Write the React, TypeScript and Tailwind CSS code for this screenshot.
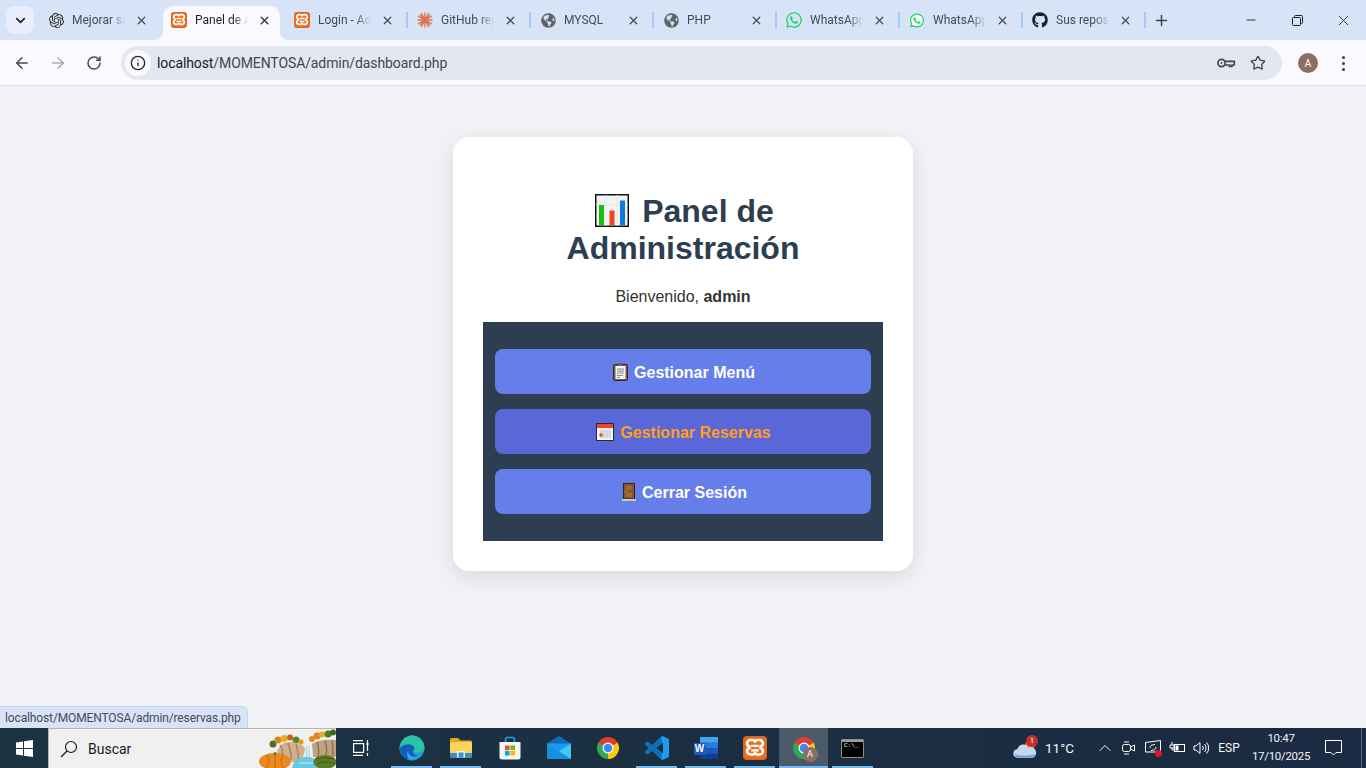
import React from "react";
import { ArrowLeft, ArrowRight, RotateCw, Info, Star, X, Plus, ChevronDown, ChevronUp, Minus } from "lucide-react";
import { FaGithub, FaGlobeAmericas, FaWhatsapp } from "react-icons/fa";
import { IoLogoWhatsapp } from "react-icons/io5";
import { SiOpenai } from "react-icons/si";

const Xampp = ({ size = 16 }: { size?: number }) => (
  <svg width={size} height={size} viewBox="0 0 16 16">
    <rect x="0.500" y="0.500" width="15" height="15" rx="2" fill="#ee6f22" stroke="#d9651e" />
    <path d="M5 2.700h1.500c.8 0 1 .6 1.500 1 .5-.4.7-1 1.500-1H11a2.300 2.300 0 0 1 2.300 2.300c0 1-.8 1.700-1.600 2 .1.400.1.600 0 1 .8.300 1.600 1 1.600 2a2.300 2.300 0 0 1-2.300 2.300H9.500c-.8 0-1-.6-1.500-1-.5.400-.7 1-1.500 1H5a2.300 2.300 0 0 1-2.300-2.300c0-1 .8-1.700 1.600-2-.1-.4-.1-.6 0-1C3.500 6.700 2.700 6 2.700 5A2.300 2.300 0 0 1 5 2.700z" fill="none" stroke="#fff" strokeWidth="1.700" />
    <path d="M5.500 6.500h5M5.500 9.500h5" stroke="#fff" strokeWidth="1.500" />
  </svg>
);

const Spark = () => (
  <svg width="16" height="16" viewBox="0 0 16 16" stroke="#d97757" strokeWidth="1.400" strokeLinecap="round">
    <path d="M8 1v14M1 8h14M3 3l10 10M13 3L3 13M4.500 1.500l7 13M11.500 1.500l-7 13M1.500 4.500l13 7M14.500 4.500l-13 7" />
  </svg>
);

const WhatsFilled = () => (
  <span className="relative flex h-4 w-4 items-center justify-center">
    <span className="absolute inset-[2px] rounded-full bg-white" />
    <IoLogoWhatsapp className="relative text-[#25d366]" size={17} />
  </span>
);

type TabData = { title: string; icon: React.ReactNode; active?: boolean; sep?: boolean };

const tabs: TabData[] = [
  { title: "Mejorar su", icon: <SiOpenai size={15} className="text-[#2b2b2b]" /> },
  { title: "Panel de Administración", icon: <Xampp />, active: true },
  { title: "Login - Administración", icon: <Xampp />, sep: true },
  { title: "GitHub repos", icon: <Spark />, sep: true },
  { title: "MYSQL", icon: <FaGlobeAmericas size={15} className="text-[#5f6368]" />, sep: true },
  { title: "PHP", icon: <FaGlobeAmericas size={15} className="text-[#5f6368]" />, sep: true },
  { title: "WhatsApp Web", icon: <FaWhatsapp size={18} className="text-[#25d366]" />, sep: true },
  { title: "WhatsApp Web", icon: <WhatsFilled />, sep: true },
  { title: "Sus repositorios", icon: <FaGithub size={16} className="text-[#1b1f24]" />, sep: true },
];

const Tab = ({ t }: { t: TabData }) => (
  <div className="relative flex h-[34px] w-[123px] shrink-0 items-center pb-[6px]">
    {t.active && (
      <>
        <div className="absolute inset-y-0 left-0 w-[117px] rounded-t-[10px] bg-[#f9f9ff]" />
        <svg className="absolute bottom-0 -left-2 h-2 w-2" viewBox="0 0 8 8"><path d="M8 0v8H0a8 8 0 0 0 8-8z" fill="#f9f9ff" /></svg>
        <svg className="absolute bottom-0 left-[117px] h-2 w-2" viewBox="0 0 8 8"><path d="M0 0v8h8a8 8 0 0 1-8-8z" fill="#f9f9ff" /></svg>
      </>
    )}
    <div className="relative ml-2 flex h-4 w-4 shrink-0 items-center justify-center">{t.icon}</div>
    <div className={`relative ml-2 w-[53px] overflow-hidden whitespace-nowrap text-[12px] leading-4 [mask-image:linear-gradient(to_right,black_72%,transparent)] ${t.active ? "text-[#1f2329]" : "text-[#454b55]"}`}>
      {t.title}
    </div>
    <X size={13} strokeWidth={2.400} className={`relative ml-[10px] shrink-0 ${t.active ? "text-[#2a2e35]" : "text-[#474c55]"}`} />
    {t.sep && <div className="absolute left-[120px] top-[6px] h-4 w-[2px] bg-[#a8c7fa]" />}
  </div>
);

const KeyIcon = () => (
  <svg width="20" height="20" viewBox="0 0 20 20" fill="none" stroke="#43474e" strokeWidth="1.700">
    <circle cx="5.500" cy="10" r="3.600" />
    <circle cx="5.500" cy="10" r="1" fill="#43474e" stroke="none" />
    <path d="M9 8.300h9.300v3.700h-2.300v1.400h-2.500V12H9" />
  </svg>
);

const TabStrip = () => (
  <div className="flex h-10 shrink-0 items-end bg-[#d7e3f7]">
    <div className="mb-[6px] ml-[6px] mr-[6px] flex h-7 w-7 shrink-0 items-center justify-center self-end rounded-lg bg-[#e8eefb]">
      <ChevronDown size={15} strokeWidth={3} className="text-[#25282d]" />
    </div>
    <div className="flex items-end">
      {tabs.map((t, i) => <Tab key={i} t={t} />)}
    </div>
    <div className="mb-[10px] ml-[4px] flex h-[20px] w-5 items-center justify-center self-end">
      <Plus size={17} strokeWidth={2.200} className="text-[#3e434b]" />
    </div>
    <div className="ml-auto flex h-10 items-center self-start text-[#1c1e22]">
      <div className="flex w-[46px] justify-center"><Minus size={14} strokeWidth={1.500} /></div>
      <div className="flex w-[46px] justify-center">
        <svg width="11" height="11" viewBox="0 0 11 11" fill="none" stroke="currentColor"><rect x="0.500" y="2.500" width="8" height="8" rx="1" /><path d="M2.500 2.500V1.500a1 1 0 0 1 1-1h6a1 1 0 0 1 1 1v6a1 1 0 0 1-1 1h-1" /></svg>
      </div>
      <div className="flex w-[46px] justify-center"><X size={17} strokeWidth={1.200} /></div>
    </div>
  </div>
);

const Toolbar = () => (
  <div className="flex h-[46px] shrink-0 items-center border-b border-[#dfe1e8] bg-[#f9f9ff] pt-px">
    <div className="flex w-[121px] shrink-0 items-center pl-[13px] text-[#454a52]">
      <ArrowLeft size={18} strokeWidth={2} />
      <ArrowRight size={18} strokeWidth={2} className="ml-[18px] text-[#a9adb4]" />
      <RotateCw size={16} strokeWidth={2.200} className="ml-[19px]" />
    </div>
    <div className="flex h-[34px] w-[1161px] shrink-0 items-center rounded-full bg-[#e4e7f2] pl-1 pr-[16px]">
      <div className="flex h-[26px] w-[26px] items-center justify-center rounded-full bg-[#f9f9ff]">
        <Info size={16} strokeWidth={2} className="text-[#26282c]" />
      </div>
      <div className="ml-[6px] whitespace-nowrap text-[14px] leading-5 tracking-[-0.1px] text-[#3f4650]">
        <span className="text-[#15181d]">localhost</span>/MOMENTOSA/admin/dashboard.php
      </div>
      <div className="ml-auto flex items-center gap-[14px]">
        <KeyIcon />
        <Star size={16} strokeWidth={2} className="text-[#43474e]" />
      </div>
    </div>
    <div className="ml-4 flex h-5 w-5 items-center justify-center rounded-full bg-[#8d6e63] text-[10px] text-white">A</div>
    <div className="ml-[24px] flex flex-col gap-[3px]">
      <span className="h-[3px] w-[3px] rounded-full bg-[#3c4048]" />
      <span className="h-[3px] w-[3px] rounded-full bg-[#3c4048]" />
      <span className="h-[3px] w-[3px] rounded-full bg-[#3c4048]" />
    </div>
  </div>
);

const ChartEmoji = () => (
  <svg width="34" height="33" viewBox="0 0 34 33" className="ml-[3px] mr-[4px] inline-block align-[-5px]">
    <rect x="0.750" y="0.750" width="32.500" height="31.500" fill="#f4f4f4" stroke="#111" strokeWidth="1.500" />
    <path d="M1 11h32M1 22h32M11 1v31M22 1v31" stroke="#e6e6e6" />
    <rect x="4" y="11" width="5" height="20" fill="#16c10d" />
    <rect x="14.500" y="16.500" width="5" height="14.500" fill="#f0421c" />
    <rect x="25" y="6.500" width="5" height="24.500" fill="#1178e0" />
  </svg>
);

const ClipEmoji = () => (
  <svg width="15" height="18" viewBox="0 0 15 18">
    <rect x="0.500" y="1.500" width="14" height="16" rx="1" fill="#7a5a36" stroke="#2a2a2a" />
    <rect x="2.500" y="3" width="10" height="13" fill="#f3f3f3" />
    <path d="M4 6h7M4 8h7M4 10h7M4 12.500h6M4 14.500h3" stroke="#8a8a8a" />
    <rect x="5" y="0" width="5" height="3" fill="#5c6168" />
  </svg>
);

const CalEmoji = () => (
  <svg width="18" height="18" viewBox="0 0 18 18">
    <rect x="0.500" y="0.500" width="17" height="17" fill="#f4f4f4" stroke="#252a3a" />
    <rect x="1" y="1" width="16" height="4" fill="#f2452d" />
    <path d="M4 8h11M4 10h11M4 12h11M4 14h11M5 7v8M8 7v8M11 7v8M14 7v8" stroke="#b8b8b8" strokeWidth="0.600" />
    <rect x="3.500" y="10.500" width="3" height="3" fill="#e6404a" />
  </svg>
);

const DoorEmoji = () => (
  <svg width="14" height="18" viewBox="0 0 14 18">
    <rect x="1.500" y="0.500" width="11" height="15.500" fill="#8a5a2e" stroke="#2d2722" />
    <rect x="3.500" y="2.500" width="7" height="5" fill="#a16a38" stroke="#6c4522" strokeWidth="0.500" />
    <rect x="3.500" y="9" width="7" height="5.500" fill="#a16a38" stroke="#6c4522" strokeWidth="0.500" />
    <circle cx="4" cy="8.500" r="0.700" fill="#e3b23c" />
    <rect x="0" y="16" width="14" height="2" fill="#c9c9c9" />
  </svg>
);

const Btn = ({ icon, label, hover }: { icon: React.ReactNode; label: string; hover?: boolean }) => (
  <div className={`flex h-[45px] items-center justify-center whitespace-nowrap rounded-lg text-[16px] font-bold ${hover ? "bg-[#5a67d8] text-[#ff9f1c]" : "bg-[#667eea] text-white"}`}>
    <span className={`flex w-[19px] justify-center ${hover ? "mr-[6px]" : "mr-[4px]"}`}>{icon}</span>
    <span className="pt-[3px] leading-5">{label}</span>
  </div>
);

const Card = () => (
  <div className="flex h-[434px] w-[460px] flex-col rounded-2xl bg-white p-[30px] text-center shadow-[0_6px_20px_rgba(0,0,0,0.1)]">
    <h1 className="mx-auto mt-[26px] w-[300px] text-[32px] font-bold leading-[37px] text-[#2c3e50]">
      <ChartEmoji /> Panel de Administración
    </h1>
    <p className="mt-[21px] text-[16px] leading-[18px] text-[#333333]">Bienvenido, <strong>admin</strong></p>
    <div className="mt-[16px] flex flex-col gap-[15px] bg-[#2c3e50] px-3 py-[27px]">
      <Btn icon={<ClipEmoji />} label="Gestionar Menú" />
      <Btn icon={<CalEmoji />} label="Gestionar Reservas" hover />
      <Btn icon={<DoorEmoji />} label="Cerrar Sesión" />
    </div>
  </div>
);

const WinLogo = () => (
  <svg width="17" height="17" viewBox="0 0 17 17" fill="#fff">
    <path d="M0 2.400 7 1.400V8H0zM8 1.300 17 0v8H8zM0 9h7v6.600L0 14.600zM8 9h9v8l-9-1.300z" />
  </svg>
);

const Autumn = () => (
  <svg width="77" height="39" viewBox="0 0 77 39" className="absolute bottom-0 right-0">
    <g>
      <circle cx="14" cy="15" r="3.500" fill="#4c6f22" /><circle cx="19" cy="11" r="3.500" fill="#d8871c" /><circle cx="25" cy="9.500" r="3.500" fill="#e3b022" />
      <circle cx="31" cy="8.500" r="3" fill="#c95f1b" /><circle cx="37" cy="11" r="3.500" fill="#5f8226" /><circle cx="42" cy="13" r="2.500" fill="#e09a1e" />
      <circle cx="53" cy="10" r="3" fill="#e08a1e" /><circle cx="58" cy="7" r="3.500" fill="#ee7e1a" /><circle cx="63" cy="5.500" r="3" fill="#e3b022" />
      <circle cx="69" cy="5" r="3.500" fill="#55771f" /><circle cx="74" cy="3.500" r="3" fill="#3f6420" />
    </g>
    <path d="M17 30C17 20 22 13 30 13 38 13 44 15 46 20L45 33H20z" fill="#d3b08c" />
    <path d="M21 16 C24 20 24 26 22 31M29 14C30 19 33 24 32 31M37 15C38 21 40 25 39 31" stroke="#a48467" strokeWidth="1.500" fill="none" />
    <path d="M53 15C58 11 68 10 77 11V28H54z" fill="#bfa284" />
    <path d="M58 13C60 18 60 23 59 28M66 12C68 17 68 22 67 28M73 12C74 17 74 22 74 27" stroke="#8f7358" strokeWidth="1.500" fill="none" />
    <path d="M46 16 C47 21 44 26 43 31H55C54 26 52 21 51 16z" fill="#dff1f5" />
    <path d="M47.500 17v13M50 17v13" stroke="#a5d8e6" />
    <path d="M33 39C34 32 39 28 48 28 56 28 61 33 62 39z" fill="#6cc7e0" />
    <path d="M40 34h14" stroke="#a7e2ef" strokeWidth="1.500" />
    <ellipse cx="16" cy="32.500" rx="16" ry="8.500" fill="#ea8a1e" />
    <path d="M7 26Q13 32 7 39M16 24v15M25 26Q19 32 25 39" stroke="#bb621a" fill="none" />
    <circle cx="16" cy="24.500" r="1.500" fill="#5f7a26" />
    <ellipse cx="66" cy="33" rx="11.500" ry="7" fill="#5d7a26" />
    <path d="M57 30Q66 27 75 30M58 35Q66 31 76 35" stroke="#3f5a18" fill="none" />
  </svg>
);

const Edge = () => (
  <svg width="26" height="26" viewBox="0 0 26 26">
    <defs>
      <linearGradient id="ea" x1="0" y1="0" x2="1" y2="1"><stop offset="0" stopColor="#36c9a0" /><stop offset="1" stopColor="#1a8fe0" /></linearGradient>
    </defs>
    <circle cx="13" cy="13" r="12.500" fill="url(#ea)" />
    <path d="M1 13C2 5 8 1 13 .5 20 .5 25.500 6 25.500 13c0 3-3 4.500-6.500 4.500-3 0-4.500-1-5-1.500 2-1 2-4-1-5.500C9 9 3 9.500 1 13z" fill="#2bc3a6" />
    <path d="M1 13c3-4 9-4.500 12-3 3 1.500 3 4.500 1 5.500-1 2 1 4 4 5 -2 2.500-5 4-8 4C5 24.500.5 19 1 13z" fill="#0f5fc0" />
    <path d="M9 15.500c0 4 4 8 9 5.500 -2.500 3-5.500 4-8 3.500C8 22 7.500 18 9 15.500z" fill="#35a5ee" />
  </svg>
);

const Explorer = () => (
  <svg width="24" height="22" viewBox="0 0 24 22">
    <path d="M1 2.500A1.500 1.500 0 0 1 2.500 1H9l2.500 2.500h10A1.500 1.500 0 0 1 23 5v3H1z" fill="#e7a81f" />
    <rect x="1" y="5" width="22" height="15.500" rx="1.500" fill="#fbd55b" />
    <rect x="1" y="16" width="22" height="4.500" fill="#2f8fd8" />
    <rect x="8" y="14" width="8" height="6.500" fill="#f7f2d8" />
    <rect x="9.500" y="15.500" width="5" height="5" fill="#2f8fd8" />
  </svg>
);

const Store = () => (
  <svg width="24" height="24" viewBox="0 0 24 24">
    <path d="M7.500 7V3.500A2 2 0 0 1 9.500 1.500h5a2 2 0 0 1 2 2V7" fill="none" stroke="#1c9ee6" strokeWidth="1.700" />
    <path d="M1.500 6h21v15a2.500 2.500 0 0 1-2.500 2.500H4A2.500 2.500 0 0 1 1.500 21z" fill="#f5f5f5" />
    <rect x="7" y="9.500" width="4.600" height="4.600" fill="#f25022" />
    <rect x="12.400" y="9.500" width="4.600" height="4.600" fill="#7fba00" />
    <rect x="7" y="14.900" width="4.600" height="4.600" fill="#00a4ef" />
    <rect x="12.400" y="14.900" width="4.600" height="4.600" fill="#ffb900" />
  </svg>
);

const Mail = () => (
  <svg width="24" height="24" viewBox="0 0 24 24">
    <path d="M0 7.500 12 0l12 7.500V12H0z" fill="#0f6cbd" />
    <rect x="0" y="7.500" width="24" height="15.500" rx="0.500" fill="#1f97e8" />
    <path d="M0 7.500 12 15l12-7.500V23H10z" fill="#3ccbf4" />
    <path d="M0 7.500V23h24L0 7.500z" fill="#1490df" />
  </svg>
);

const Chrome = ({ size = 24 }: { size?: number }) => (
  <svg width={size} height={size} viewBox="0 0 24 24">
    <path d="M12 12 21.530 6.500A11 11 0 0 0 2.470 6.500L2.470 17.500z" fill="#e33b2e" />
    <path d="M12 12 2.470 6.500A11 11 0 0 0 14 22.800z" fill="#2da94f" />
    <path d="M12 12 21.530 6.500A11 11 0 0 1 12 23z" fill="#fdc60f" />
    <path d="M12 12 21.530 6.500H12z" fill="#e33b2e" />
    <circle cx="12" cy="12" r="5.500" fill="#fff" />
    <circle cx="12" cy="12" r="4.300" fill="#4285f4" />
  </svg>
);

const VSCode = () => (
  <svg width="24" height="24" viewBox="0 0 24 24">
    <defs><clipPath id="vl"><rect x="0" y="0" width="16.800" height="24" /></clipPath></defs>
    <path d="M23.150 2.587L18.210.21a1.494 1.494 0 0 0-1.705.29l-9.460 8.630-4.120-3.128a.999.999 0 0 0-1.276.057L.327 7.261A1 1 0 0 0 .326 8.740L3.899 12 .326 15.260a1 1 0 0 0 .001 1.479L1.650 17.940a.999.999 0 0 0 1.276.057l4.120-3.128 9.460 8.630a1.492 1.492 0 0 0 1.704.290l4.942-2.377A1.500 1.500 0 0 0 24 20.060V3.939a1.500 1.500 0 0 0-.85-1.352zm-5.146 14.861L10.826 12l7.178-5.448v10.896z" fill="#1f9cf0" />
    <path clipPath="url(#vl)" d="M23.150 2.587L18.210.21a1.494 1.494 0 0 0-1.705.29l-9.460 8.630-4.120-3.128a.999.999 0 0 0-1.276.057L.327 7.261A1 1 0 0 0 .326 8.740L3.899 12 .326 15.260a1 1 0 0 0 .001 1.479L1.650 17.940a.999.999 0 0 0 1.276.057l4.120-3.128 9.460 8.630a1.492 1.492 0 0 0 1.704.290l4.942-2.377A1.500 1.500 0 0 0 24 20.060V3.939a1.500 1.500 0 0 0-.85-1.352zm-5.146 14.861L10.826 12l7.178-5.448v10.896z" fill="#0b6fb8" />
  </svg>
);

const Word = () => (
  <span className="relative block h-[22px] w-6">
    <svg width="24" height="22" viewBox="0 0 24 22" className="absolute inset-0">
      <rect x="6" y="0" width="18" height="22" rx="1.500" fill="#2b7cd3" />
      <rect x="6" y="0" width="18" height="5.500" fill="#41a5ee" />
      <rect x="6" y="5.500" width="18" height="5.500" fill="#2b7cd3" />
      <rect x="6" y="11" width="18" height="5.500" fill="#185abd" />
      <rect x="6" y="16.500" width="18" height="5.500" fill="#103f91" />
      <rect x="0" y="6" width="12" height="12" rx="1" fill="#185abd" />
    </svg>
    <span className="absolute left-0 top-[6px] w-3 text-center font-['Liberation_Sans',sans-serif] text-[10px] font-bold leading-3 text-white">W</span>
  </span>
);

const Term = () => (
  <span className="flex h-[19px] w-[23px] flex-col rounded-[1px] border border-[#8a8f94] bg-black">
    <span className="h-[2px] w-full bg-[#9aa0a6]" />
    <span className="pl-[2px] font-['Liberation_Mono',monospace] text-[6px] leading-[7px] text-white">C:\_</span>
  </span>
);

const TaskCell = ({ children, on, active }: { children: React.ReactNode; on?: boolean; active?: boolean }) => (
  <div className={`relative flex h-10 w-[49px] shrink-0 items-center justify-center ${active ? "bg-[#4a5a68]" : ""}`}>
    {children}
    {on && <div className={`absolute bottom-0 h-[2px] bg-[#76b9ed] ${active ? "inset-x-0" : "inset-x-1"}`} />}
  </div>
);

const TrayCell = ({ w, children }: { w: string; children: React.ReactNode }) => (
  <div className={`flex h-10 shrink-0 items-center justify-center ${w}`}>{children}</div>
);

const Taskbar = () => (
  <div className="flex h-10 shrink-0 items-center bg-gradient-to-r from-[#1c3441] to-[#1a2a42] text-white">
    <div className="flex h-10 w-12 shrink-0 items-center justify-center"><WinLogo /></div>
    <div className="relative flex h-10 w-[288px] shrink-0 items-center border-t border-l border-[#b5b5b5] bg-[#f0f0f0] pl-[11px] text-[#1a1a1a]">
      <svg width="18" height="18" viewBox="0 0 18 18" fill="none" stroke="#1a1a1a" strokeWidth="1.200">
        <circle cx="11" cy="7" r="5.500" /><path d="M7 11 1 17" />
      </svg>
      <span className="ml-[10px] text-[14px] leading-5">Buscar</span>
      <Autumn />
    </div>
    <TaskCell>
      <svg width="18" height="16" viewBox="0 0 18 16" fill="none" stroke="#fff" strokeWidth="1.200">
        <path d="M1 .6h10M1 15.400h10" /><rect x="1.600" y="3.600" width="10" height="8.800" /><path d="M15.500 0v3M15.500 5v6M15.500 13v3" /><rect x="14.500" y="3" width="2" height="2" fill="#fff" stroke="none" />
      </svg>
    </TaskCell>
    <div className="ml-[2px] flex items-center">
      <TaskCell on><Edge /></TaskCell>
      <TaskCell on><Explorer /></TaskCell>
      <TaskCell><Store /></TaskCell>
      <TaskCell><Mail /></TaskCell>
      <TaskCell><Chrome /></TaskCell>
      <TaskCell on><VSCode /></TaskCell>
      <TaskCell on><Word /></TaskCell>
      <TaskCell on><Xampp size={24} /></TaskCell>
      <TaskCell on active>
        <span className="relative block h-6 w-6">
          <Chrome />
          <span className="absolute -bottom-[2px] -right-[2px] flex h-[15px] w-[15px] items-center justify-center rounded-full bg-[#8d6e63] text-[9px] leading-none text-white">A</span>
        </span>
      </TaskCell>
      <TaskCell on><Term /></TaskCell>
    </div>
    <div className="ml-auto flex items-center text-[#f2f4f6]">
      <TrayCell w="w-[32px]">
        <span className="relative block h-6 w-6">
          <svg width="24" height="24" viewBox="0 0 24 24" className="absolute inset-0">
            <circle cx="17" cy="9" r="5" fill="#d9772c" />
            <path d="M5 22a4.500 4.500 0 0 1-.5-9 6 6 0 0 1 11-1.500 5.500 5.500 0 0 1 4 10.500z" fill="#c3d9ef" />
            <path d="M2 18c4 2 12 2 20 0-1 3-2 4-4 4H5c-2 0-3-2-3-4z" fill="#7fa6d2" />
          </svg>
          <span className="absolute -top-[1px] right-[-1px] flex h-[12px] w-[12px] items-center justify-center rounded-full bg-[#c9302c] text-[8px] leading-none text-white">1</span>
        </span>
      </TrayCell>
      <div className="flex h-10 w-[52px] shrink-0 items-center pl-[4px] text-[13.500px] leading-5">11°C</div>
      <TrayCell w="w-[24px]"><ChevronUp size={20} strokeWidth={1.200} /></TrayCell>
      <TrayCell w="w-[24px]">
        <svg width="16" height="16" viewBox="0 0 16 16" fill="none" stroke="#fff" strokeWidth="1"><rect x="1.500" y="4.500" width="8" height="7" rx="2" /><path d="M9.500 7l4-2v6l-4-2M3 2h5M3 14h5" /></svg>
      </TrayCell>
      <TrayCell w="w-[24px]">
        <span className="relative block h-4 w-4">
          <svg width="16" height="16" viewBox="0 0 16 16" fill="none" stroke="#fff" strokeWidth="1"><path d="M.500 2.500 15.500 .5v11.500H.500z" /><path d="M5 8a3 3 0 0 1 4-3l1-1M11 7a3 3 0 0 1-4 3l-1 1" /></svg>
          <span className="absolute -bottom-[1px] -right-[1px] h-[7px] w-[7px] rounded-full bg-[#e81123]" />
        </span>
      </TrayCell>
      <TrayCell w="w-[24px]">
        <svg width="16" height="14" viewBox="0 0 16 14" fill="none" stroke="#fff" strokeWidth="1"><rect x="5.500" y="3.500" width="10" height="7" /><rect x="6.500" y="4.500" width="3" height="5" fill="#fff" stroke="none" /><path d="M3 1v3M1 4h4v3H1zM3 7v2h2" /></svg>
      </TrayCell>
      <TrayCell w="w-[24px]">
        <svg width="16" height="16" viewBox="0 0 16 16" fill="none" stroke="#fff" strokeWidth="1"><path d="M1 6h2l4-3.500v11L3 10H1zM9.500 6a3 3 0 0 1 0 4M11.500 4a6 6 0 0 1 0 8M13.500 2.500a8 8 0 0 1 0 11" /></svg>
      </TrayCell>
      <TrayCell w="w-[32px]"><span className="text-[12px] leading-4">ESP</span></TrayCell>
      <div className="flex h-10 w-[72px] shrink-0 flex-col items-center justify-center text-[11.500px] tracking-[-0.3px]">
        <span className="leading-[17px]">10:47</span>
        <span className="leading-[19px]">17/10/2025</span>
      </div>
      <TrayCell w="w-[32px]">
        <svg width="17" height="16" viewBox="0 0 17 16" fill="none" stroke="#fff" strokeWidth="1"><path d="M.500 .5h16v12H11l-2.500 2.500L6 12.500H.500z" /></svg>
      </TrayCell>
      <div className="h-10 w-[12px]" />
      <div className="h-10 w-[5px] border-l border-[#5a6878]" />
    </div>
  </div>
);

export default function App() {
  return (
    <div className="relative flex h-[768px] w-[1366px] flex-col overflow-hidden font-['Roboto',sans-serif]">
      <TabStrip />
      <Toolbar />
      <main className="flex flex-1 justify-center bg-[#f0f2f5] pt-[51px] font-['Liberation_Sans',sans-serif]">
        <Card />
      </main>
      <div className="absolute bottom-10 left-0 rounded-tr-md border-t border-r border-[#c9d3e6] bg-[#d7e3f7] pl-[5px] pr-[6px] pt-px text-[12px] leading-[20px] tracking-[-0.13px] text-[#454b55]">
        localhost/MOMENTOSA/admin/reservas.php
      </div>
      <Taskbar />
    </div>
  );
}
